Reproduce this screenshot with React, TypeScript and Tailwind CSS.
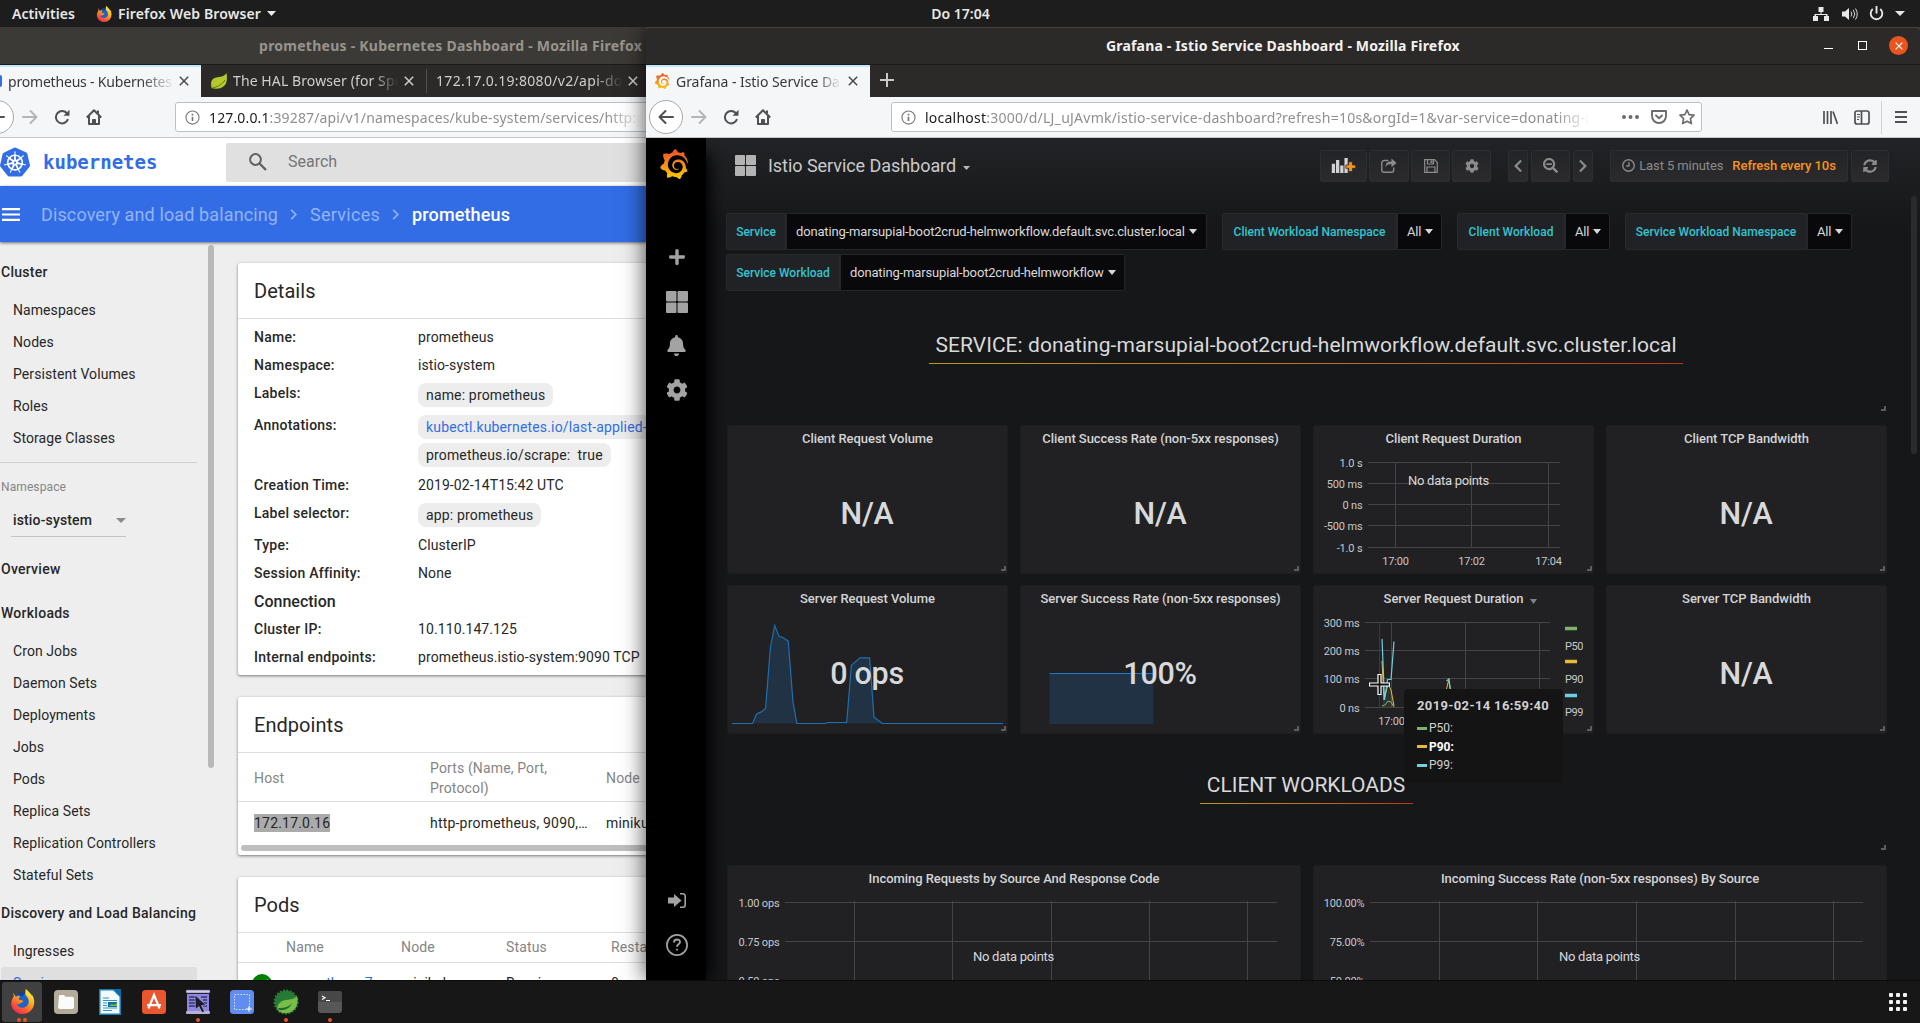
import type { ReactNode } from "react";
import { FaBell, FaChevronLeft, FaChevronRight, FaCog, FaPlus, FaSearchMinus, FaSyncAlt } from "react-icons/fa";
import { SiGrafana, SiKubernetes } from "react-icons/si";

const ui = "font-['Noto_Sans',sans-serif]";

/* ---------- shared icons ---------- */

function Caret({ className = "" }: { className?: string }) {
  return (
    <svg viewBox="0 0 10 6" preserveAspectRatio="none" className={className} fill="currentColor">
      <path d="M0 0h10L5 6z" />
    </svg>
  );
}

function Close({ className = "" }: { className?: string }) {
  return (
    <svg viewBox="0 0 10 10" className={className} fill="none" stroke="currentColor" strokeWidth="1.5">
      <path d="M.8.8l8.4 8.4M9.2.8L.8 9.2" />
    </svg>
  );
}

function ArrowLeft({ className = "" }: { className?: string }) {
  return (
    <svg viewBox="0 0 16 16" className={className} fill="none" stroke="currentColor" strokeWidth="2" strokeLinecap="round" strokeLinejoin="round">
      <path d="M15 8H1.5M7.5 2l-6 6 6 6" />
    </svg>
  );
}

function Reload() {
  return (
    <svg viewBox="0 0 16 16" className="size-4 text-[#4f5054]" fill="none" stroke="currentColor" strokeWidth="2">
      <path d="M13.2 4.6A6.2 6.2 0 1 0 14 10.200" />
      <path d="M9.500 6.800h6V.8z" fill="currentColor" stroke="none" />
    </svg>
  );
}

function Home() {
  return (
    <svg viewBox="0 0 16 16" className="size-4 text-[#4f5054]" fill="none" stroke="currentColor" strokeWidth="2" strokeLinejoin="round">
      <path d="M.8 8.500L8 1.300l7.200 7.200M3 7v8h10V7" />
      <path d="M6.500 15v-4.500h3V15z" fill="currentColor" strokeWidth="1" />
      <path d="M12 1.500v3" />
    </svg>
  );
}

function Info() {
  return (
    <svg viewBox="0 0 16 16" className="size-[15px] shrink-0 text-[#77777b]" fill="none" stroke="currentColor">
      <circle cx="8" cy="8" r="7" strokeWidth="1.200" />
      <path d="M8 7.200v4.600M8 4v1.800" strokeWidth="1.800" />
    </svg>
  );
}

function FirefoxIcon({ className = "" }: { className?: string }) {
  return (
    <svg viewBox="0 0 32 32" className={className}>
      <defs>
        <linearGradient id="fx" x1="0.8" y1="0" x2="0.2" y2="1">
          <stop offset="0" stopColor="#fff44f" />
          <stop offset="0.35" stopColor="#ffb81c" />
          <stop offset="0.65" stopColor="#ff6a2b" />
          <stop offset="1" stopColor="#e9205d" />
        </linearGradient>
      </defs>
      <circle cx="15.500" cy="16.500" r="11" fill="#1c63c9" />
      <path d="M10 7c2-3 6-4 9-2l-3 5z" fill="#153e8f" />
      <path d="M4 4c0 3 .5 4 1 5-3 4-4 9-3 13 2 6 8 10 14 10 9 0 15-7 15-15 0-4-1-8-4-11 1 2 1 4 1 5-2-5-5-8-8-11 0 4-1 5 0 8 2 2 4 5 4 8 0 5-4 8-8 8-4 0-7-2-8-5 2 1 4 1 6-1 1-1 3-1 3-2 0-2-3-2-5-2-1-1-1-3 1-5-2-.5-4 0-5 1C6 8 4.500 6 4 4z" fill="url(#fx)" />
      <path d="M20 0c4 3 8 7 10 13-2-2-3-4-5-5-1-2-4-4-5-8z" fill="#ffe83c" />
    </svg>
  );
}

function GrafanaLogo({ className = "" }: { className?: string }) {
  return (
    <span className={className}>
      <svg width="0" height="0" className="absolute">
        <defs>
          <linearGradient id="graf" x1="0" y1="0" x2="0" y2="1">
            <stop offset="0.1" stopColor="#f05a28" />
            <stop offset="1" stopColor="#fbca0a" />
          </linearGradient>
        </defs>
      </svg>
      <SiGrafana className="size-full" fill="url(#graf)" />
    </span>
  );
}

function AppsIcon({ className = "" }: { className?: string }) {
  return (
    <svg viewBox="0 0 22 22" className={className} fill="currentColor">
      <rect width="10.500" height="10.500" rx="1" />
      <rect x="11.500" width="10.500" height="10.500" rx="1" />
      <rect y="11.500" width="10.500" height="10.500" rx="1" />
      <rect x="11.500" y="11.500" width="10.500" height="10.500" rx="1" />
    </svg>
  );
}

/* ---------- desktop bars ---------- */

function TopBar() {
  return (
    <header className={`${ui} grid h-[27px] shrink-0 grid-cols-3 items-center bg-[#1d1d1d] text-[14px] font-semibold text-[#e8e8e6]`}>
      <div className="flex items-center pl-3">
        <span className="tracking-[0.06px]">Activities</span>
        <FirefoxIcon className="ml-[21px] size-4" />
        <span className="ml-[6px] tracking-[0.14px]">Firefox Web Browser</span>
        <Caret className="ml-[6px] h-[5px] w-[9px]" />
      </div>
      <div className="pl-px text-center">Do 17:04</div>
      <div className="flex items-center justify-end pr-[15px]">
        <svg viewBox="0 0 16 14" className="h-[14px] w-4" fill="currentColor">
          <path d="M5.500 0h5v5h-2v2h6v2h1.500v5h-5V9h2V8h-10v1h2v5H0V9h1.500V7h6V5h-2z" />
        </svg>
        <svg viewBox="0 0 16 14" className="ml-[13px] h-[14px] w-4" fill="none" stroke="currentColor">
          <path d="M0 4.500h3L7 1v12L3 9.500H0z" fill="currentColor" stroke="none" />
          <path d="M9 4.500q1.800 2.500 0 5M11.300 2.800q3 4.200 0 8.400M13.500 1.500q3.500 5.500 0 11" opacity=".9" />
        </svg>
        <svg viewBox="0 0 16 16" className="ml-[11px] h-[15px] w-[15px]" fill="none" stroke="currentColor" strokeWidth="2">
          <path d="M4 3.200a6.200 6.200 0 1 0 8 0M8 0v8" />
        </svg>
        <Caret className="ml-[11px] h-[5px] w-[10px]" />
      </div>
    </header>
  );
}

function DockItem({ children, dots = 0, active = false }: { children: ReactNode; dots?: number; active?: boolean }) {
  return (
    <div className={`flex h-[40px] w-[40px] flex-col items-center rounded-[3px] ${active ? "bg-[#404040]" : ""}`}>
      <div className="flex h-[37px] items-center pt-[3px]">{children}</div>
      <div className="flex gap-[2px]">
        {Array.from({ length: dots }, (_, i) => (
          <span key={i} className="size-1 rounded-full bg-[#e95420]" />
        ))}
      </div>
    </div>
  );
}

function Dock() {
  return (
    <footer className="flex h-[43px] shrink-0 items-start border-t border-[#0b0b0b] bg-[#171717] pt-px">
      <nav className="flex gap-1 pl-[2px]">
        <DockItem dots={2} active>
          <FirefoxIcon className="size-[25px]" />
        </DockItem>
        <DockItem>
          <span className="flex size-6 items-center justify-center rounded-[4px] bg-[#b3ac9b]">
            <svg viewBox="0 0 16 14" className="h-[14px] w-4" fill="#fbfbf9">
              <path d="M1 1a1 1 0 0 1 1-1h4l1.500 1.800H14a2 2 0 0 1 2 2V12a2 2 0 0 1-2 2H2a2 2 0 0 1-2-2z" />
            </svg>
          </span>
        </DockItem>
        <DockItem>
          <svg viewBox="0 0 22 26" className="h-[26px] w-[22px]">
            <path d="M0 0h15l7 7v19H0z" fill="#1380bd" />
            <path d="M1.500 1.500h12.800l6.200 6.200v16.800h-19z" fill="#f2fafe" />
            <path d="M14 0h8v8z" fill="#0c6ba3" />
            <path d="M4 9h6M4 11.500h14M4 14h4M4 16.500h4M4 19h14M4 21.500h9" stroke="#3394c4" />
            <path d="M9 13h9v5H9z" fill="#127099" />
            <path d="M10 17l3-2 2 1 3-2v3z" fill="#7ac143" />
          </svg>
        </DockItem>
        <DockItem>
          <svg viewBox="0 0 24 24" className="size-6">
            <rect width="24" height="24" rx="3.500" fill="#e9562f" />
            <path d="M6.500 18.500L12 5l5.500 13.500M5 15.200h14" fill="none" stroke="#fff" strokeWidth="2.200" />
          </svg>
        </DockItem>
        <DockItem dots={1}>
          <svg viewBox="0 0 26 26" className="size-[26px]">
            <rect x="1" y="1" width="24" height="3" rx="1" fill="#cfcbe8" stroke="#555080" strokeWidth=".5" />
            <rect x="2" y="5" width="22" height="17" fill="#8c86e0" />
            <rect x="1" y="22" width="24" height="3" rx="1" fill="#b5b0d4" />
            <path d="M4 8h6M4 11h7M4 14h6M4 17h7M16 8h6M18 11h4M18 14h4M18 17h4" stroke="#37346b" strokeWidth="1.500" />
            <path d="M10 6l11 10-4.500.5 3 6-2.500 1-3-6-3.500 3z" fill="#1b1a2e" stroke="#c8c6dd" strokeWidth=".5" />
          </svg>
        </DockItem>
        <DockItem>
          <svg viewBox="0 0 24 24" className="size-6">
            <rect width="24" height="24" rx="3.500" fill="#628df0" />
            <path d="M4.500 4.500h15v15h-15z" fill="none" stroke="#dbe6ff" strokeDasharray="1.500 1.500" />
            <path d="M19 16v6M16 19h6" stroke="#fff" />
          </svg>
        </DockItem>
        <DockItem dots={1}>
          <svg viewBox="0 0 26 26" className="size-[26px]">
            <circle cx="13" cy="13" r="11.500" fill="none" stroke="#2f8436" strokeWidth="2" strokeDasharray="1.800 1.600" />
            <circle cx="13" cy="13" r="11.300" fill="#267a35" />
            <path d="M24 7c2 7-1 14-7 16.500-4 1.500-8 .5-11-1C2 18 6 12 13 11c5-.5 8-1 11-4z" fill="#77bd48" />
            <path d="M5 19c6 .5 11-1 14-5-2 5-7 8-13 7z" fill="#1e6b31" />
          </svg>
        </DockItem>
        <DockItem dots={1}>
          <svg viewBox="0 0 24 24" className="size-6">
            <rect y="1" width="24" height="22" rx="3" fill="#575757" />
            <path d="M0 4a3 3 0 0 1 3-3h18a3 3 0 0 1 3 3v8H0z" fill="#474747" />
            <path d="M4 6l3 1.800L4 9.500M8 10.500h4" stroke="#fff" strokeWidth="1.200" fill="none" />
          </svg>
        </DockItem>
      </nav>
      <div className="mt-[11px] mr-[13px] ml-auto grid grid-cols-3 gap-[3px]">
        {Array.from({ length: 9 }, (_, i) => (
          <span key={i} className="size-1 rounded-[1px] bg-[#f2f2f0]" />
        ))}
      </div>
    </footer>
  );
}

/* ---------- Kubernetes dashboard window ---------- */

const fade = "[mask-image:linear-gradient(to_right,black_85%,transparent)]";

function SideHeading({ children }: { children: ReactNode }) {
  return <div className="flex h-11 items-center pl-px font-medium tracking-[0.26px]">{children}</div>;
}

function SideItem({ children }: { children: ReactNode }) {
  return <div className="flex h-8 items-center pl-[13px] tracking-[0.08px]">{children}</div>;
}

function KubeSidebar() {
  return (
    <aside className="w-[197px] shrink-0 pt-2 text-[14px] text-[#272727]">
      <SideHeading>Cluster</SideHeading>
      {["Namespaces", "Nodes", "Persistent Volumes", "Roles", "Storage Classes"].map((t) => (
        <SideItem key={t}>{t}</SideItem>
      ))}
      <div className="mt-2 h-px bg-[#cfcfcf]" />
      <div className="mt-[15px] h-[18px] pl-px text-[12px] leading-[18px] tracking-[0.1px] text-[#858585]">Namespace</div>
      <div className="mt-[8px] ml-[11px] flex h-[33px] w-[115px] items-center justify-between border-b border-[#c4c4c4] pl-[2px]">
        <span className="font-medium tracking-[0.14px]">istio-system</span>
        <Caret className="h-[5px] w-[10px] text-[#8a8a8a]" />
      </div>
      <div className="h-[10px]" />
      <SideHeading>Overview</SideHeading>
      <SideHeading>Workloads</SideHeading>
      {["Cron Jobs", "Daemon Sets", "Deployments", "Jobs", "Pods", "Replica Sets", "Replication Controllers", "Stateful Sets"].map((t) => (
        <SideItem key={t}>{t}</SideItem>
      ))}
      <SideHeading>Discovery and Load Balancing</SideHeading>
      <SideItem>Ingresses</SideItem>
      <div className="ml-px flex h-8 items-center rounded-[2px] bg-[#dfdfdf] pl-[12px] text-[#326de6]">Services</div>
    </aside>
  );
}

function Card({ title, children, className = "" }: { title: string; children: ReactNode; className?: string }) {
  return (
    <section className={`w-[520px] shrink-0 rounded-[2px] bg-white shadow-[0_1px_3px_rgba(0,0,0,0.5)] ${className}`}>
      <h2 className="flex h-14 items-center border-b border-[#dedede] pl-4 text-[20px] tracking-[0.05px]">{title}</h2>
      {children}
    </section>
  );
}

function Detail({ name, children, h = "h-7" }: { name: string; children?: ReactNode; h?: string }) {
  return (
    <div className={`flex ${h}`}>
      <div className="w-[164px] shrink-0 leading-7 font-medium tracking-[0.25px]">{name}</div>
      <div className="leading-7 tracking-[0.1px] whitespace-nowrap">{children}</div>
    </div>
  );
}

function Chip({ children, link = false }: { children: ReactNode; link?: boolean }) {
  return (
    <div className="mt-1">
      <span className={`block h-6 w-fit rounded-lg bg-[#ededed] px-2 leading-6 tracking-[0.16px] whitespace-pre ${link ? "text-[#326de6]" : ""}`}>{children}</span>
    </div>
  );
}

function KubeContent() {
  return (
    <main className="flex w-[419px] shrink-0 flex-col overflow-hidden pt-[21px] pl-[10px] text-[14px] text-[#272727]">
      <div className="flex flex-col gap-[22px] pl-px">
        <Card title="Details" className="h-[412px]">
          <div className="pt-1 pl-4">
            <Detail name="Name:">prometheus</Detail>
            <Detail name="Namespace:">istio-system</Detail>
            <Detail name="Labels:" h="h-8">
              <Chip>name: prometheus</Chip>
            </Detail>
            <Detail name="Annotations:" h="h-[60px]">
              <Chip link>kubectl.kubernetes.io/last-applied-configuration</Chip>
              <Chip>prometheus.io/scrape:  true</Chip>
            </Detail>
            <Detail name="Creation Time:">2019-02-14T15:42 UTC</Detail>
            <Detail name="Label selector:" h="h-8">
              <Chip>app: prometheus</Chip>
            </Detail>
            <Detail name="Type:">ClusterIP</Detail>
            <Detail name="Session Affinity:">None</Detail>
            <div className="h-7 pt-px text-[16px] leading-7 font-medium">Connection</div>
            <Detail name="Cluster IP:">10.110.147.125</Detail>
            <Detail name="Internal endpoints:">prometheus.istio-system:9090 TCP</Detail>
          </div>
        </Card>
        <Card title="Endpoints" className="h-[158px]">
          <div className="flex h-[49px] items-center border-b border-[#dedede] pt-px pl-4 leading-5 tracking-[0.14px] text-[#858585]">
            <span className="w-[176px] shrink-0">Host</span>
            <span className="w-[176px] shrink-0">
              Ports (Name, Port,
              <br />
              Protocol)
            </span>
            <span>Node</span>
          </div>
          <div className="flex h-[43px] items-center pl-4 tracking-[0.2px] whitespace-nowrap">
            <span className="w-[176px] shrink-0">
              <span className="bg-[#ababab] py-px">172.17.0.16</span>
            </span>
            <span className="w-[176px] shrink-0">http-prometheus, 9090,…</span>
            <span>minikube</span>
          </div>
          <div className="ml-[3px] h-[6px] rounded-full bg-[#bdbfbe]" />
        </Card>
        <Card title="Pods" className="h-[200px]">
          <div className="flex h-[30px] items-center border-b border-[#dedede] pl-12 tracking-[0.14px] text-[#858585]">
            <span className="w-[115px] shrink-0">Name</span>
            <span className="w-[105px] shrink-0">Node</span>
            <span className="w-[105px] shrink-0">Status</span>
            <span>Restarts</span>
          </div>
          <div className="flex h-[40px] items-center pl-4">
            <svg viewBox="0 0 20 20" className="mt-px -ml-[2px] size-5">
              <circle cx="10" cy="10" r="10" fill="#008000" />
              <path d="M4.500 10l4 4L16 6" stroke="#fff" strokeWidth="2" fill="none" />
            </svg>
            <span className="ml-[14px] w-[115px] shrink-0 text-[#326de6]">prometheus-7…</span>
            <span className="w-[105px] shrink-0">minikube</span>
            <span className="w-[105px] shrink-0">Running</span>
            <span>0</span>
          </div>
        </Card>
      </div>
    </main>
  );
}

function KubeWindow() {
  return (
    <section className="flex w-[646px] shrink-0 flex-col overflow-hidden bg-[#eeeeee] font-[Roboto,sans-serif]">
      <div className={`${ui} flex h-[37px] shrink-0 items-center justify-end bg-[#3c3a37] pr-1 text-[14px] font-bold whitespace-nowrap text-[#97948e]`}>
        <span className="tracking-[0.25px]">prometheus - Kubernetes Dashboard - Mozilla Firefox</span>
      </div>
      <div className={`${ui} flex h-[33px] shrink-0 border-t border-[#1c1a1a] bg-[#2c2929] text-[14px] whitespace-nowrap`}>
        <div className="flex w-[201px] items-center border-t-2 border-[#bfe9fb] bg-[#f5f6f8] pb-[2px] text-[#37373a]">
          <span className="h-3 w-[2px] rounded-r-full bg-[#326de6]" />
          <span className="ml-[6px] w-[167px] overflow-hidden tracking-[-0.19px] [mask-image:linear-gradient(to_right,black_80%,transparent)]">prometheus - Kubernetes</span>
          <Close className="ml-[4px] size-[10px] text-[#4a4a4d]" />
        </div>
        <div className="flex w-[225px] items-center pb-px pl-[10px] text-[#cfcecd]">
          <svg viewBox="0 0 16 16" className="size-4">
            <path d="M15.500 0c.8 5 .8 10-2.500 13-4 3.500-9 3-12.500 2C-.5 10 0 6 5 4.500 9 3.500 13 4 15.500 0z" fill="#b5c92c" />
            <path d="M1 15c5-1 10-3 13-8" stroke="#5f7a17" fill="none" />
          </svg>
          <span className={`ml-[6px] w-[165px] overflow-hidden tracking-[0.1px] ${fade}`}>The HAL Browser (for Spring)</span>
          <Close className="ml-[6px] size-[10px]" />
        </div>
        <div className="flex items-center pb-px text-[#cfcecd]">
          <span className="h-6 w-px bg-[#55524f]" />
          <span className={`ml-[9px] w-[187px] overflow-hidden tracking-[0.32px] ${fade}`}>172.17.0.19:8080/v2/api-docs</span>
          <Close className="ml-[5px] size-[10px]" />
        </div>
      </div>
      <div className={`${ui} flex h-[41px] shrink-0 items-center border-b border-[#c3c7ca] bg-[#f5f6f8] text-[14px]`}>
        <span className="-ml-[20px] flex size-[34px] shrink-0 items-center justify-center rounded-full border border-[#a9a9ab] bg-white">
          <ArrowLeft className="size-4 text-[#4f5054]" />
        </span>
        <ArrowLeft className="ml-2 size-4 shrink-0 rotate-180 text-[#b4b5b7]" />
        <span className="ml-[16px]">
          <Reload />
        </span>
        <span className="ml-4">
          <Home />
        </span>
        <div className="ml-[73px] flex h-[30px] w-[600px] shrink-0 items-center rounded-[3px] border border-[#bcc0c6] bg-white pl-[9px]">
          <Info />
          <span className="ml-[9px] w-[433px] overflow-hidden tracking-[0.14px] whitespace-nowrap text-[#8f8f93] [mask-image:linear-gradient(to_right,black_92%,transparent)]">
            <span className="text-[#1c1c20]">127.0.0.1</span>:39287/api/v1/namespaces/kube-system/services/http:prometheus
          </span>
        </div>
      </div>
      <div className="flex h-12 shrink-0 items-center bg-white">
        <SiKubernetes className="size-[30px] shrink-0 text-[#326de6]" />
        <span className="ml-[13px] w-[114px] shrink-0 font-['DejaVu_Sans_Mono',monospace] text-[19px] leading-[30px] font-bold text-[#326de6]">kubernetes</span>
        <div className="ml-[69px] flex h-[39px] w-[500px] shrink-0 items-center rounded-[2px] bg-[#e0e0e0] pl-[23px] text-[16px] text-[#757575]">
          <svg viewBox="0 0 18 18" className="size-[18px]" fill="none" stroke="#616161" strokeWidth="2">
            <circle cx="6.500" cy="6.500" r="5.400" />
            <path d="M10.500 10.500l6.500 6.500" strokeWidth="2.400" />
          </svg>
          <span className="ml-[21px]">Search</span>
        </div>
      </div>
      <div className="z-10 flex h-14 shrink-0 items-center bg-[#326de6] text-[18px] whitespace-nowrap text-[#93b3f3] shadow-[0_1px_3px_rgba(0,0,0,0.55)]">
        <svg viewBox="0 0 18 13" className="ml-[2px] h-[13px] w-[18px]" fill="#fff">
          <path d="M0 0h18v2.200H0zM0 5.400h18v2.200H0zM0 10.800h18V13H0z" />
        </svg>
        <span className="ml-[21px] tracking-[0.12px]">Discovery and load balancing</span>
        <svg viewBox="0 0 7 12" className="mt-px ml-[12px] h-[11px] w-[7px]" fill="none" stroke="#93b3f3" strokeWidth="1.800">
          <path d="M1 1l5 5-5 5" />
        </svg>
        <span className="ml-[13px] tracking-[0.27px]">Services</span>
        <svg viewBox="0 0 7 12" className="mt-px ml-[12px] h-[11px] w-[7px]" fill="none" stroke="#93b3f3" strokeWidth="1.800">
          <path d="M1 1l5 5-5 5" />
        </svg>
        <span className="mt-px ml-[13px] font-medium tracking-[0.13px] text-white">prometheus</span>
      </div>
      <div className="flex min-h-0 flex-1 overflow-hidden">
        <KubeSidebar />
        <div className="mt-[3px] mr-[13px] ml-[11px] h-[523px] w-[6px] shrink-0 rounded-full bg-[#b7b9b8]" />
        <KubeContent />
      </div>
    </section>
  );
}

/* ---------- Grafana window ---------- */

function GrafanaChrome() {
  return (
    <div className={`${ui} shrink-0 text-[14px] whitespace-nowrap`}>
      <div className="flex h-[37px] items-center rounded-t-[4px] border-t border-[#454342] bg-[#2c2929] pb-px">
        <div className="flex-1 pl-[460px] text-[14px] font-bold tracking-[0.17px] text-[#f3f2f0]">Grafana - Istio Service Dashboard - Mozilla Firefox</div>
        <div className="flex items-center gap-[25px] pr-[12px]">
          <span className="mt-[6px] h-px w-[9px] bg-white" />
          <span className="size-[9px] border border-white" />
          <span className="-ml-[3px] flex size-[19px] items-center justify-center rounded-full bg-[#e95420]">
            <Close className="size-[8px] text-white" />
          </span>
        </div>
      </div>
      <div className="flex h-[33px] border-t border-[#1c1a1a] bg-[#2c2929]">
        <div className="flex w-[224px] items-center border-t-2 border-[#bfe9fb] bg-[#f5f6f8] pb-[2px] pl-[8px] text-[#37373a]">
          <GrafanaLogo className="size-4" />
          <span className={`ml-[6px] w-[165px] overflow-hidden tracking-[-0.05px] ${fade}`}>Grafana - Istio Service Dashboard</span>
          <Close className="ml-[7px] size-[10px] text-[#4a4a4d]" />
        </div>
        <svg viewBox="0 0 14 14" className="mt-[8px] ml-[10px] size-[14px]" stroke="#c9c8c7" strokeWidth="2">
          <path d="M7 0v14M0 7h14" />
        </svg>
      </div>
      <div className="flex h-[41px] items-center border-b border-[#c3c7ca] bg-[#f5f6f8]">
        <span className="ml-[3px] flex size-[34px] shrink-0 items-center justify-center rounded-full border border-[#a9a9ab] bg-white">
          <ArrowLeft className="size-4 text-[#4f5054]" />
        </span>
        <ArrowLeft className="ml-2 size-4 rotate-180 text-[#b4b5b7]" />
        <span className="ml-[16px]">
          <Reload />
        </span>
        <span className="ml-4">
          <Home />
        </span>
        <div className="ml-[120px] flex h-[30px] w-[811px] shrink-0 items-center rounded-[3px] border border-[#bcc0c6] bg-white pl-[9px] text-[#8f8f93]">
          <Info />
          <span className="ml-[9px] w-[665px] overflow-hidden tracking-[0.24px] [mask-image:linear-gradient(to_right,black_95%,transparent)]">
            <span className="text-[#1c1c20]">localhost</span>:3000/d/LJ_uJAvmk/istio-service-dashboard?refresh=10s&amp;orgId=1&amp;var-service=donating-marsupial
          </span>
          <svg viewBox="0 0 17 4" className="ml-[32px] h-1 w-[17px]" fill="#6b6b70">
            <circle cx="2" cy="2" r="2" />
            <circle cx="8.500" cy="2" r="2" />
            <circle cx="15" cy="2" r="2" />
          </svg>
          <svg viewBox="0 0 16 14" className="ml-[12px] h-[14px] w-4" fill="none" stroke="#6b6b70" strokeWidth="1.900" strokeLinecap="round" strokeLinejoin="round">
            <path d="M1 1h14v5c0 4-3 7-7 7S1 10 1 6z" />
            <path d="M5 5.500l3 2.800 3-2.800" />
          </svg>
          <svg viewBox="0 0 16 16" className="ml-[12px] size-4" fill="none" stroke="#6b6b70" strokeWidth="1.700" strokeLinejoin="round">
            <path d="M8 1l2.100 4.600 4.900.6-3.600 3.400 1 5L8 12.200l-4.400 2.400 1-5L1 6.200l4.900-.6z" />
          </svg>
        </div>
        <svg viewBox="0 0 15 15" className="ml-[121px] size-[15px]" stroke="#4f5054" strokeWidth="1.700" fill="none">
          <path d="M1 1v13M4.500 1v13M8 1v13M10 1.500l4.500 12.500" />
        </svg>
        <svg viewBox="0 0 16 15" className="ml-4 h-[15px] w-4" stroke="#4f5054" strokeWidth="1.700" fill="none">
          <rect x="1" y="1" width="14" height="13" rx="2" />
          <path d="M7.500 1v13" />
          <path d="M3 4.500h3M3 7h3M3 9.500h2" strokeWidth="1" />
        </svg>
        <span className="ml-[11px] h-[33px] w-px bg-[#d0d2d5]" />
        <svg viewBox="0 0 12 12" className="ml-[13px] h-3 w-3" fill="#4f5054">
          <path d="M0 0h12v2H0zM0 5h12v2H0zM0 10h12v2H0z" />
        </svg>
      </div>
    </div>
  );
}

function SideMenu() {
  return (
    <aside className="z-10 flex w-[60px] shrink-0 flex-col items-center bg-black pl-[1px] text-[#a3a3a3] shadow-[12px_8px_16px_-8px_black]">
      <GrafanaLogo className="mt-[11px] mr-[5px] size-[30px]" />
      <FaPlus className="mt-[69px] size-[18px]" />
      <AppsIcon className="mt-[25px] size-[22px]" />
      <FaBell className="mt-[22px] h-[21px] w-[19px]" />
      <FaCog className="mt-[23px] size-[22px]" />
      <div className="flex-1" />
      <svg viewBox="0 0 18 15" className="h-[15px] w-[18px]">
        <path d="M0 4.500h6V1l7.500 6.500L6 14v-3.500H0z" fill="#a3a3a3" />
        <path d="M12 .8h3a2.200 2.200 0 0 1 2.200 2.200v9a2.200 2.200 0 0 1-2.200 2.200h-3" fill="none" stroke="#a3a3a3" strokeWidth="1.600" />
      </svg>
      <svg viewBox="0 0 22 22" className="mt-[26px] mb-[24px] size-[22px]" fill="none" stroke="#a3a3a3">
        <circle cx="11" cy="11" r="10.100" strokeWidth="1.700" />
        <path d="M8 8.500c0-4 6-4 6-.5 0 2.500-3 2-3 4.800" strokeWidth="1.900" />
        <circle cx="11" cy="15.600" r=".7" fill="#a3a3a3" strokeWidth=".8" />
      </svg>
    </aside>
  );
}

function NavButton({ children, className }: { children: ReactNode; className: string }) {
  return <button className={`flex h-8 items-center justify-center rounded-[2px] border border-[#2d2e31] bg-gradient-to-b from-[#232427] to-[#2b2b2e] text-[#8b8b8c] ${className}`}>{children}</button>;
}

function GrafanaNav() {
  return (
    <div className="flex h-[55px] shrink-0 items-center pl-[29px]">
      <AppsIcon className="size-[21px] text-[#b3b3b3]" />
      <span className="ml-[12px] text-[18px] tracking-[-0.05px] text-[#c9cacb]">Istio Service Dashboard</span>
      <Caret className="mt-1 ml-[7px] h-[4px] w-[7px] text-[#b8b8b8]" />
      <div className="mr-[31px] ml-auto flex items-center">
        <NavButton className="w-[47px]">
          <svg viewBox="0 0 25 16" className="h-[15px] w-[25px]">
            <path d="M0 6h3.500v10H0zM4.500 2H8v14H4.500zM9 8h3.500v8H9zM13.500 0H17v16h-3.500z" fill="#d2d2d2" />
            <path d="M18 4h4v3.500h3.500V11H22v3.500h-4V11h-3V7.500h3z" fill="#f79320" stroke="#27282b" strokeWidth=".8" />
          </svg>
        </NavButton>
        <NavButton className="ml-[2px] w-[40px]">
          <svg viewBox="0 0 16 15" className="h-[15px] w-4" fill="none" stroke="currentColor" strokeWidth="1.400">
            <path d="M7.500 2.500H3A2.200 2.200 0 0 0 .8 4.700V12A2.200 2.200 0 0 0 3 14.200h7.500A2.200 2.200 0 0 0 12.700 12V9.500" />
            <path d="M4.500 9.500c0-5 2-6 6-6V.5L15.500 5l-5 4.300V6.300c-3 0-5 .5-6 3.200z" fill="currentColor" stroke="none" />
          </svg>
        </NavButton>
        <NavButton className="ml-[2px] w-[39px]">
          <svg viewBox="0 0 14 14" className="size-[14px]" fill="none" stroke="currentColor" strokeWidth="1.200">
            <path d="M.7.700h9.800l2.800 2.800v9.800H.7z" />
            <path d="M3.500.700v4.300h6V.7M3 13.300V8h8v5.300" />
            <path d="M6.500 1.500h2v2.500h-2z" fill="currentColor" strokeWidth="0" />
          </svg>
        </NavButton>
        <NavButton className="ml-[2px] w-[39px]">
          <FaCog className="size-[14px]" />
        </NavButton>
        <NavButton className="ml-[17px] w-[20px]">
          <FaChevronLeft className="size-[14px] shrink-0" />
        </NavButton>
        <NavButton className="ml-[3px] w-[39px]">
          <FaSearchMinus className="size-[15px]" />
        </NavButton>
        <NavButton className="ml-[3px] w-[20px]">
          <FaChevronRight className="size-[14px] shrink-0" />
        </NavButton>
        <NavButton className="ml-[17px] w-[238px] text-[13px] whitespace-nowrap">
          <svg viewBox="0 0 14 14" className="mr-[4px] size-[13px]" fill="none" stroke="currentColor" strokeWidth="1.500">
            <circle cx="7" cy="7" r="6.200" />
            <path d="M7.500 3.500v4H4.500" />
          </svg>
          <span className="tracking-[-0.1px]">Last 5 minutes</span>
          <span className="ml-[9px] font-medium tracking-[-0.05px] text-[#f7941e]">Refresh every 10s</span>
        </NavButton>
        <NavButton className="ml-[3px] w-[38px]">
          <FaSyncAlt className="size-[14px]" />
        </NavButton>
      </div>
    </div>
  );
}

function Variable({ label, value, labelW, valueW }: { label: string; value: string; labelW: string; valueW: string }) {
  return (
    <div className="flex h-[37px] items-stretch whitespace-nowrap">
      <div className={`flex items-center justify-center rounded-l-[2px] border border-[#28292b] bg-[#212225] text-[12px] font-medium text-[#33c4d0] ${labelW}`}>{label}</div>
      <div className={`flex items-center rounded-r-[2px] border border-[#262628] bg-[#09090b] pl-[9px] text-[13px] tracking-[-0.16px] text-[#d8d9da] ${valueW}`}>
        {value}
        <Caret className="ml-[4px] h-[5px] w-[8px]" />
      </div>
    </div>
  );
}

function Handle() {
  return <span className="absolute right-[1px] bottom-[2px] size-[5px] border-r-2 border-b-2 border-[#5d5d5f]" />;
}

function Panel({ title, children, className = "", menu = false }: { title: string; children?: ReactNode; className?: string; menu?: boolean }) {
  return (
    <section className={`relative flex flex-col rounded-[2px] border border-[#1d1d1f] bg-[#212124] ${className}`}>
      <h3 className={`flex h-[26px] shrink-0 items-center justify-center pb-px text-[13px] font-medium tracking-[-0.05px] text-[#d3d4d5] ${menu ? "pl-[14px]" : ""}`}>
        {title}
        {menu && <Caret className="mt-[5px] ml-[7px] h-[5px] w-[7px] text-[#818284]" />}
      </h3>
      {children}
      <Handle />
    </section>
  );
}

function Stat({ children }: { children: ReactNode }) {
  return <div className="relative mt-[44px] pr-px text-center text-[30.5px] leading-[36px] font-medium tracking-[-0.3px] text-[#d8d9da]">{children}</div>;
}

function RowTitle({ children, w, h, pt }: { children: ReactNode; w: string; h: string; pt: string }) {
  return (
    <div className={`relative flex flex-col items-center ${h} ${pt}`}>
      <div className={`-ml-[2px] text-center text-[21px] leading-[36px] whitespace-nowrap text-[#d8d9da] ${w}`}>{children}</div>
      <div className={`-ml-[2px] h-px bg-gradient-to-r from-[#b59a1b] via-[#c2701a] to-[#b9341a] ${w}`} />
      <Handle />
    </div>
  );
}

type Tick = { at: number; text: string };

function Axes({ x0, x1, y0, y1, ys, xs, labelX }: { x0: number; x1: number; y0: number; y1: number; ys: Tick[]; xs: Tick[]; labelX: number }) {
  return (
    <>
      <g stroke="#454547" shapeRendering="crispEdges">
        {ys.map((t) => (
          <line key={t.at} x1={x0} x2={x1} y1={t.at} y2={t.at} />
        ))}
        {xs.map((t) => (
          <line key={t.at} x1={t.at} x2={t.at} y1={y0} y2={y1} />
        ))}
      </g>
      <g fill="#c7c8c9" fontSize="11" letterSpacing="-0.15">
        {ys.map((t) => (
          <text key={t.at} x={labelX} y={t.at + 4} textAnchor="end">
            {t.text}
          </text>
        ))}
        {xs.map((t) => (
          <text key={t.at} x={t.at} y={y1 + 18} textAnchor="middle">
            {t.text}
          </text>
        ))}
      </g>
    </>
  );
}

/* Chart coordinates are local to the panel, in pixels. */

function ClientDurationChart() {
  return (
    <svg viewBox="0 27 281 120" className="-ml-px h-[120px] w-[281px]">
      <Axes
        x0={55} x1={247} y0={37} y1={122} labelX={49.500}
        ys={[{ at: 37.5, text: "1.0 s" }, { at: 58.5, text: "500 ms" }, { at: 79.5, text: "0 ns" }, { at: 100.5, text: "-500 ms" }, { at: 122.5, text: "-1.0 s" }]}
        xs={[{ at: 82.5, text: "17:00" }, { at: 158.5, text: "17:02" }, { at: 235.5, text: "17:04" }]}
      />
      <text x="135.500" y="60" fontSize="13" letterSpacing="-0.28" textAnchor="middle" fill="#d8d9da">No data points</text>
    </svg>
  );
}

function ServerDurationChart() {
  return (
    <svg viewBox="0 27 281 120" className="-ml-px h-[120px] w-[281px]" fill="none">
      <Axes
        x0={52} x1={237} y0={37} y1={122} labelX={46.500}
        ys={[{ at: 37.5, text: "300 ms" }, { at: 65.5, text: "200 ms" }, { at: 93.5, text: "100 ms" }, { at: 122.5, text: "0 ns" }]}
        xs={[{ at: 78.5, text: "17:00" }, { at: 152.5, text: "17:02" }, { at: 226.5, text: "17:04" }]}
      />
      <path d="M68.500 76v46H81l-3-18-6 1-3 17z" fill="#7eb26d" opacity=".14" />
      <path d="M66.500 37v85" stroke="#a00f0f" />
      <path d="M69 121l3-1 3-4 3 1 3 5" stroke="#7eb26d" />
      <path d="M69 76l2 39 4-16 3 6 3 16M133.500 104l2-8.500 2 9" stroke="#eab839" />
      <path d="M69 54l2.500 61L74.500 94.500h3.500l3-38M133.500 96l2.500-2 2 16" stroke="#6ed0e0" strokeWidth="1.200" />
      <path d="M252 43.500h12" stroke="#7eb26d" strokeWidth="3.500" />
      <path d="M252 76.500h12" stroke="#eab839" strokeWidth="3.500" />
      <path d="M252 110.500h12" stroke="#6ed0e0" strokeWidth="3.500" />
      <svg x="252" y="27" width="18" height="120">
        <g fill="#c7c8c9" fontSize="11" letterSpacing="-0.4">
          <text y="37.500">P50</text>
          <text y="70.500">P90</text>
          <text y="103.500">P99</text>
        </g>
      </svg>
    </svg>
  );
}

function RequestSparkline() {
  return (
    <svg viewBox="0 27 281 120" className="absolute top-[26px] -left-px h-[120px] w-[281px]" fill="none">
      <path
        d="M5 138.500H25.600l3.900-9.600 4.800-2 4.300-3.400 4.800-61 4.300-22 4.300 10.700 4 1.300 5.200 3.700 4.800 60.700 3.900 21.600H98.300l2-1h19.400l4.700-57.300 8.700-7.300h9.500l4.400 59.300 8.300 6.300H276"
        fill="#1f78c1"
        fillOpacity=".2"
        stroke="#1f6fae"
        strokeWidth="1.200"
      />
    </svg>
  );
}

function SuccessSparkline() {
  return (
    <svg viewBox="0 27 281 120" className="absolute top-[26px] -left-px h-[120px] w-[281px]">
      <rect x="29.500" y="88.500" width="104" height="50.500" fill="#1f78c1" fillOpacity=".2" />
      <path d="M29.500 88.500h104" stroke="#1f78c1" />
    </svg>
  );
}

function WideChart({ ys, labelX, x0, x1, xs }: { ys: Tick[]; labelX: number; x0: number; x1: number; xs: number[] }) {
  return (
    <svg viewBox="0 27 574 88" className="-ml-px h-[88px] w-[574px] shrink-0">
      <Axes x0={x0} x1={x1} y0={36} y1={150} labelX={labelX} ys={ys} xs={xs.map((at) => ({ at, text: "" }))} />
      <text x="286.500" y="96" fontSize="13" letterSpacing="-0.28" textAnchor="middle" fill="#d8d9da">No data points</text>
    </svg>
  );
}

function Tooltip() {
  const rows = [
    { name: "P50:", line: "bg-[#7eb26d]", text: "" },
    { name: "P90:", line: "bg-[#eab839]", text: "font-bold text-white" },
    { name: "P99:", line: "bg-[#6ed0e0]", text: "" },
  ];
  return (
    <div className="absolute top-[103px] left-[90px] z-20 h-[94px] w-[159px] rounded-[4px] bg-[#141414] pt-[8px] pl-[13px] text-[#d0d1d2]">
      <div className="text-[13px] leading-[18px] font-bold tracking-[0.36px] whitespace-nowrap">2019-02-14 16:59:40</div>
      <div className="mt-[4px]">
        {rows.map((r) => (
          <div key={r.name} className={`flex h-[18.5px] items-center gap-[2px] text-[12px] ${r.text}`}>
            <span className={`h-[3px] w-[10px] ${r.line}`} />
            {r.name}
          </div>
        ))}
      </div>
    </div>
  );
}

function CrossCursor() {
  return (
    <svg viewBox="0 0 21 21" className="absolute top-[88px] left-[55px] z-20 size-[21px]">
      <path d="M9 .5h3V9h8.500v3H12v8.500H9V12H.5V9H9z" fill="#111" stroke="#fff" strokeWidth="1.200" />
    </svg>
  );
}

function GrafanaWindow() {
  return (
    <section className="z-10 flex min-w-0 flex-1 flex-col font-[Roboto,sans-serif] shadow-[0_0_22px_rgba(0,0,0,0.75)]">
      <GrafanaChrome />
      <div className="flex min-h-0 flex-1 overflow-hidden bg-black">
        <SideMenu />
        <main className="flex min-w-0 flex-1 flex-col overflow-hidden bg-[linear-gradient(#222326,#161719_90px)]">
          <GrafanaNav />
          <div className="flex min-h-0 flex-1 pt-[3px] pr-[3px]">
            <div className="min-w-0 flex-1 pl-[21px]">
              <div className="-ml-px flex flex-wrap gap-x-[15px] gap-y-[4px] pt-[17px]">
                <Variable label="Service" value="donating-marsupial-boot2crud-helmworkflow.default.svc.cluster.local" labelW="w-[60px]" valueW="w-[421px]" />
                <Variable label="Client Workload Namespace" value="All" labelW="w-[175px]" valueW="w-[45px]" />
                <Variable label="Client Workload" value="All" labelW="w-[108px]" valueW="w-[45px]" />
                <Variable label="Service Workload Namespace" value="All" labelW="w-[182px]" valueW="w-[45px]" />
                <Variable label="Service Workload" value="donating-marsupial-boot2crud-helmworkflow" labelW="w-[114px]" valueW="w-[285px]" />
              </div>
              <div className="w-[1160px]">
                <RowTitle w="w-[754px]" h="h-[122px]" pt="pt-[36px]">
                  <span className="tracking-[0.05px]">SERVICE: donating-marsupial-boot2crud-helmworkflow.default.svc.cluster.local</span>
                </RowTitle>
                <div className="mt-[12px] grid grid-cols-4 gap-x-3 gap-y-[11px]">
                  <Panel title="Client Request Volume" className="h-[149px]">
                    <Stat>N/A</Stat>
                  </Panel>
                  <Panel title="Client Success Rate (non-5xx responses)" className="h-[149px]">
                    <Stat>N/A</Stat>
                  </Panel>
                  <Panel title="Client Request Duration" className="h-[149px]">
                    <ClientDurationChart />
                  </Panel>
                  <Panel title="Client TCP Bandwidth" className="h-[149px]">
                    <Stat>N/A</Stat>
                  </Panel>
                  <Panel title="Server Request Volume" className="h-[149px]">
                    <RequestSparkline />
                    <Stat>0 ops</Stat>
                  </Panel>
                  <Panel title="Server Success Rate (non-5xx responses)" className="h-[149px]">
                    <SuccessSparkline />
                    <Stat>100%</Stat>
                  </Panel>
                  <Panel title="Server Request Duration" className="h-[149px]" menu>
                    <ServerDurationChart />
                    <CrossCursor />
                    <Tooltip />
                  </Panel>
                  <Panel title="Server TCP Bandwidth" className="h-[149px]">
                    <Stat>N/A</Stat>
                  </Panel>
                </div>
                <RowTitle w="w-[213px]" h="h-[118px]" pt="pt-[33px]">
                  <span className="tracking-[-0.01px]">CLIENT WORKLOADS</span>
                </RowTitle>
                <div className="mt-[13px] grid grid-cols-2 gap-x-3">
                  <Panel title="Incoming Requests by Source And Response Code" className="h-[300px]">
                    <WideChart
                      ys={[{ at: 37.5, text: "1.00 ops" }, { at: 76.5, text: "0.75 ops" }, { at: 115.5, text: "0.50 ops" }]}
                      labelX={52.500} x0={58} x1={550} xs={[127.5, 225.5, 324.5, 422.5, 520.5]}
                    />
                  </Panel>
                  <Panel title="Incoming Success Rate (non-5xx responses) By Source" className="h-[300px]">
                    <WideChart
                      ys={[{ at: 37.5, text: "100.00%" }, { at: 76.5, text: "75.00%" }, { at: 115.5, text: "50.00%" }]}
                      labelX={51.500} x0={57} x1={550} xs={[126.5, 224.5, 323.5, 422.5, 520.5]}
                    />
                  </Panel>
                </div>
              </div>
            </div>
            <div className="h-[258px] w-[6px] rounded-full bg-[#2b2b2d]" />
          </div>
        </main>
      </div>
    </section>
  );
}

export default function App() {
  return (
    <div className="flex h-[1023px] w-[1920px] flex-col overflow-hidden bg-black">
      <TopBar />
      <div className="flex h-[953px] shrink-0 overflow-hidden bg-[#3c3a37]">
        <KubeWindow />
        <GrafanaWindow />
      </div>
      <Dock />
    </div>
  );
}
